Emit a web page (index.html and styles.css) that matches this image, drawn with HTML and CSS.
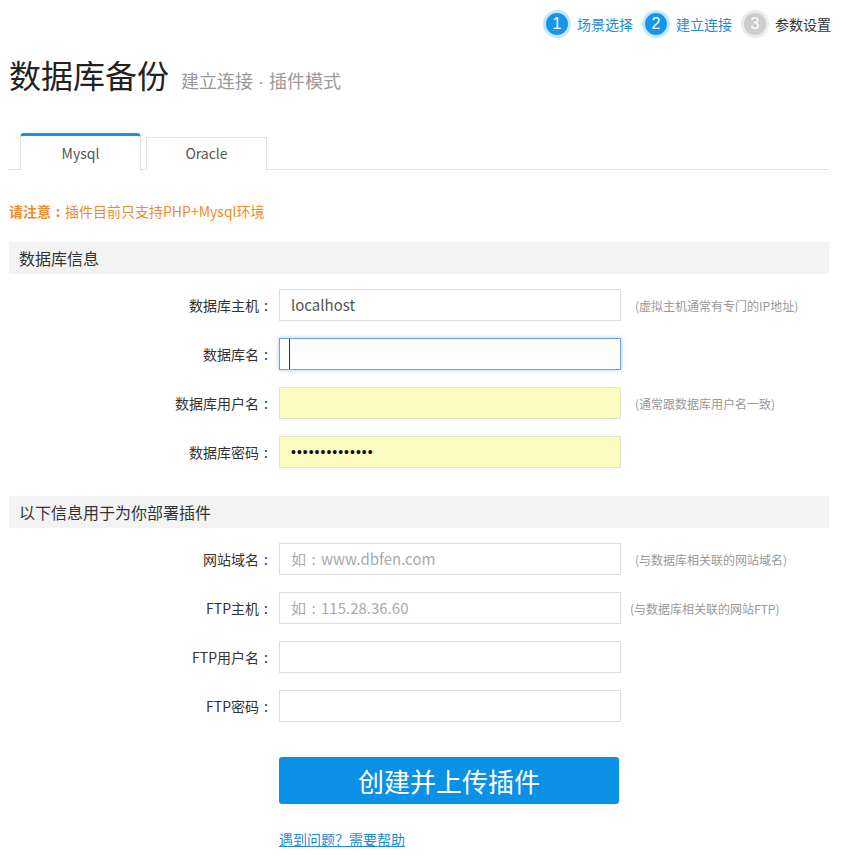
FILE: index.html
```html
<!DOCTYPE html>
<html lang="zh-CN">
<head>
  <meta charset="UTF-8">
  <title>数据库备份</title>
  <link rel="stylesheet" href="styles.css">
</head>
<body>

<div class="page">

  <div class="steps">
    <div class="step done"><span class="step-num">1</span><span class="step-text">场景选择</span></div>
    <div class="step done"><span class="step-num">2</span><span class="step-text">建立连接</span></div>
    <div class="step"><span class="step-num">3</span><span class="step-text">参数设置</span></div>
  </div>

  <h1 class="title">数据库备份<small>建立连接<span class="dot">·</span>插件模式</small></h1>

  <div class="tabs">
    <a class="tab active" href="#">Mysql</a>
    <a class="tab" href="#">Oracle</a>
  </div>

  <p class="notice"><b>请注意<span class="colon">:</span></b>插件目前只支持PHP+Mysql环境</p>

  <div class="section-title">数据库信息</div>
  <div class="form-row">
    <label>数据库主机<span class="colon">:</span></label>
    <div class="input">localhost</div>
    <span class="hint">(虚拟主机通常有专门的IP地址)</span>
  </div>
  <div class="form-row">
    <label>数据库名<span class="colon">:</span></label>
    <div class="input focus"><span class="caret"></span></div>
  </div>
  <div class="form-row">
    <label>数据库用户名<span class="colon">:</span></label>
    <div class="input filled"></div>
    <span class="hint">(通常跟数据库用户名一致)</span>
  </div>
  <div class="form-row">
    <label>数据库密码<span class="colon">:</span></label>
    <div class="input filled dots">••••••••••••••</div>
  </div>

  <div class="section-title second">以下信息用于为你部署插件</div>
  <div class="form-row">
    <label>网站域名<span class="colon">:</span></label>
    <div class="input placeholder">如<span class="colon">:</span>www.dbfen.com</div>
    <span class="hint">(与数据库相关联的网站域名)</span>
  </div>
  <div class="form-row">
    <label>FTP主机<span class="colon">:</span></label>
    <div class="input placeholder">如<span class="colon">:</span>115.28.36.60</div>
    <span class="hint near">(与数据库相关联的网站FTP)</span>
  </div>
  <div class="form-row">
    <label>FTP用户名<span class="colon">:</span></label>
    <div class="input"></div>
  </div>
  <div class="form-row">
    <label>FTP密码<span class="colon">:</span></label>
    <div class="input"></div>
  </div>

  <div class="actions">
    <button class="submit-btn">创建并上传插件</button>
    <a class="help-link" href="#">遇到问题？需要帮助</a>
  </div>

</div>

</body>
</html>
```

FILE: styles.css
```css
body {
  margin: 0;
  padding: 0;
  font-family: "Noto Sans CJK SC", "Open Sans", sans-serif;
  color: #333;
  background-color: #fff;
}

.page {
  width: 820px;
  padding-left: 9px;
}

/* ponctuation pleine chasse, centrée */
.colon {
  display: inline-block;
  width: 1em;
  text-align: center;
}

/* etapes */
.steps {
  display: flex;
  justify-content: flex-end;
  gap: 9px;
  padding-top: 10px;
  margin-right: -2px;
}

.step {
  display: flex;
  align-items: center;
  gap: 6px;
  font-size: 14px;
  color: #333;
}

.step-num {
  width: 22px;
  height: 22px;
  border-radius: 50%;
  background-color: #ccc;
  border: 3px solid #ebebeb;
  color: #fff;
  font-family: "Liberation Sans", Arial, sans-serif;
  font-size: 16px;
  line-height: 22px;
  text-align: center;
}

.step.done .step-num {
  background-color: #1596ea;
  border-color: #c8e6fb;
}

.step.done .step-text {
  color: #1f8ad6;
}

.title {
  margin: 15px 0 0 0;
  font-size: 32px;
  font-weight: normal;
  line-height: 42px;
  color: #222;
}

.title small {
  margin-left: 12px;
  font-size: 18px;
  color: #999;
}

.title .dot {
  font-family: "Liberation Sans", Arial, sans-serif;
  margin: 0 5px;
}

/* onglets */
.tabs {
  display: flex;
  align-items: flex-end;
  gap: 5px;
  margin-top: 30px;
  padding-left: 11px;
  border-bottom: 1px solid #e3e3e3;
}

.tab {
  width: 119px;
  height: 32px;
  line-height: 31px;
  text-align: center;
  font-size: 14px;
  color: #555;
  text-decoration: none;
  border: 1px solid #e3e3e3;
  border-bottom: none;
  margin-bottom: -1px;
  background-color: #fff;
}

.tab.active {
  height: 34px;
  line-height: 34px;
  border-top: 3px solid #1b8ee0;
  border-radius: 4px 4px 0 0;
}

.notice {
  margin: 30px 0 0 0;
  font-size: 14px;
  line-height: 22px;
  color: #f18a2b;
}

.notice b {
  font-weight: bold;
}

.section-title {
  margin-top: 20px;
  height: 32px;
  line-height: 32px;
  padding-left: 10px;
  background-color: #f3f3f3;
  font-size: 16px;
  color: #333;
}

.section-title.second {
  margin-top: 28px;
}

.form-row {
  display: flex;
  align-items: center;
  margin-top: 15px;
}

.form-row + .form-row {
  margin-top: 17px;
}

.form-row label {
  width: 264px;
  text-align: right;
  font-size: 14px;
  color: #333;
}

.input {
  box-sizing: border-box;
  width: 342px;
  height: 32px;
  margin-left: 6px;
  padding-left: 11px;
  border: 1px solid #ddd;
  background-color: #fff;
  font-size: 15px;
  line-height: 30px;
  color: #555;
}

.input.focus {
  border-color: #6aa2e8;
  box-shadow: 0 0 4px rgba(82, 150, 236, 0.5);
  display: flex;
  align-items: center;
}

.caret {
  display: inline-block;
  width: 1px;
  height: 30px;
  background-color: #333;
  margin-left: -2px;
}

.input.filled {
  background-color: #fafcc0;
  border-color: #e3e3c8;
}

.input.dots {
  color: #111;
  font-family: "Liberation Sans", Arial, sans-serif;
  font-size: 14px;
  letter-spacing: 1px;
}

.input.placeholder {
  color: #aaa;
}

.hint {
  margin-left: 14px;
  font-size: 12px;
  color: #999;
}

.hint.near {
  margin-left: 9px;
}

.actions {
  display: flex;
  flex-direction: column;
  align-items: flex-start;
  padding-left: 270px;
  margin-top: 35px;
}

.submit-btn {
  width: 340px;
  height: 47px;
  border: none;
  border-radius: 3px;
  background-color: #0b90e8;
  color: #fff;
  font-family: "Noto Sans CJK SC", sans-serif;
  font-size: 26px;
  cursor: pointer;
}

.help-link {
  margin-top: 25px;
  font-size: 14px;
  color: #1d8ad8;
}
```
